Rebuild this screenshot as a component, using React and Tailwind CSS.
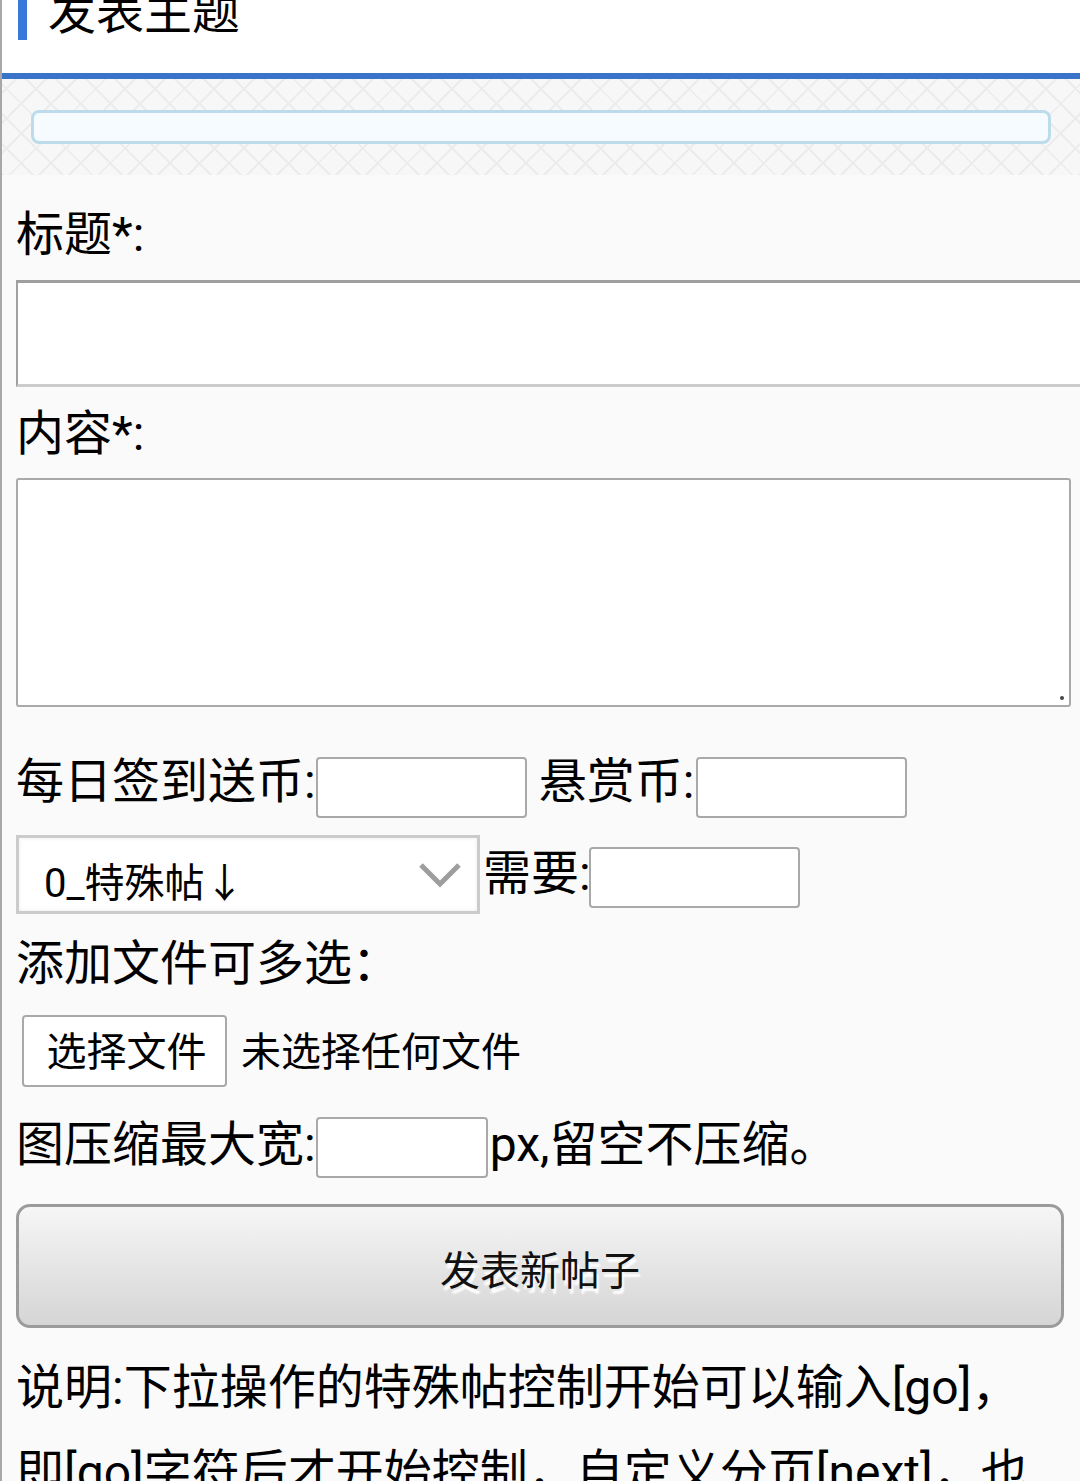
import { useState } from "react";

const FONT = "font-[Roboto,'Noto_Sans_CJK_SC',sans-serif]";

function App() {
  const [title, setTitle] = useState("");
  const [content, setContent] = useState("");

  return (
    <div className={`w-[1080px] h-[1481px] overflow-hidden border-l-2 border-[#a8a8a8] bg-[#fafafa] text-black ${FONT}`}>

      {/* ===== header ===== */}
      <div className="h-[79px] bg-white border-b-[6px] border-[#3a74c8] overflow-hidden">
        <div className="flex items-start pl-[16px] -mt-[11px]">
          <div className="w-[9px] h-[51px] bg-[#3778d8]"></div>
          <h1 className="ml-[21px] text-[48px] leading-[48px] font-normal">
            发表主题
          </h1>
        </div>
      </div>

      {/* ===== notice box ===== */}
      <div className="py-[31px] pl-[29px] pr-[29px] bg-[#f7f7f7] bg-[repeating-linear-gradient(45deg,#ececec_0_2px,transparent_2px_21px),repeating-linear-gradient(-45deg,#ececec_0_2px,transparent_2px_21px)]">
        <div className="h-[34px] rounded-[8px] border-[3px] border-[#bcdcec] bg-[#f5fbfe]"></div>
      </div>

      {/* ===== form ===== */}
      <div className="pl-[14px]">

        <div className="mt-[36px] text-[48px] leading-[48px]">标题*:</div>

        <input
          type="text"
          value={title}
          onChange={(e) => setTitle(e.target.value)}
          className="block mt-[21px] w-[1100px] h-[107px] bg-white border-l-2 border-t-[3px] border-b-[3px] border-r-0 border-l-[#a0a0a0] border-t-[#9e9e9e] border-b-[#cccccc] outline-none"
        />

        <div className="mt-[23px] text-[48px] leading-[48px]">内容*:</div>

        <div className="relative mt-[20px] w-[1055px] h-[229px]">
          <textarea
            value={content}
            onChange={(e) => setContent(e.target.value)}
            className="block w-full h-full bg-white border-2 border-[#a9a9a9] rounded-[3px] resize-none outline-none"
          />
          <div className="absolute right-[7px] bottom-[7px] w-[4px] h-[4px] rounded-full bg-[#444]"></div>
        </div>

        {/* row 1 */}
        <div className="flex items-start mt-[50px]">
          <span className="mt-[1px] text-[48px] leading-[48px] whitespace-nowrap">每日签到送币:</span>
          <input type="text" className="w-[211px] h-[61px] bg-white border-2 border-[#a9a9a9] rounded-[4px] outline-none" />
          <span className="ml-[12px] mt-[1px] text-[48px] leading-[48px] whitespace-nowrap">悬赏币:</span>
          <input type="text" className="ml-[2px] w-[211px] h-[61px] bg-white border-2 border-[#a9a9a9] rounded-[4px] outline-none" />
        </div>

        {/* row 2 */}
        <div className="flex items-start mt-[17px]">
          <div className="relative w-[464px] h-[79px] bg-white border-[3px] border-[#cbcbcb] shadow-[inset_0_0_4px_rgba(0,0,0,0.08)]">
            <span className="absolute left-[25px] top-[22px] text-[40px] leading-[48px] whitespace-nowrap">0_特殊帖↓</span>
            <svg className="absolute right-[15px] top-[24px]" width="44" height="26" viewBox="0 0 44 26">
              <path d="M3 3 L22 22 L41 3" fill="none" stroke="#9e9e9e" strokeWidth="5" />
            </svg>
          </div>
          <span className="ml-[3px] mt-[15px] text-[48px] leading-[48px] whitespace-nowrap">需要:</span>
          <input type="text" className="mt-[12px] -ml-[2px] w-[211px] h-[61px] bg-white border-2 border-[#a9a9a9] rounded-[4px] outline-none" />
        </div>

        <div className="mt-[26px] text-[48px] leading-[48px]">添加文件可多选：</div>

        {/* file */}
        <div className="flex items-center mt-[27px]">
          <button className="ml-[6px] w-[205px] h-[72px] bg-white border-2 border-[#a9a9a9] rounded-[4px] text-[40px] leading-[48px] pl-[4px] pt-[4px]">
            选择文件
          </button>
          <span className="ml-[14px] pt-[4px] text-[40px] leading-[48px]">未选择任何文件</span>
        </div>

        {/* compress */}
        <div className="flex items-start mt-[30px]">
          <span className="mt-[4px] text-[48px] leading-[48px] whitespace-nowrap">图压缩最大宽:</span>
          <input type="text" className="w-[172px] h-[61px] bg-white border-2 border-[#a9a9a9] rounded-[4px] outline-none" />
          <span className="ml-[2px] mt-[4px] text-[48px] leading-[48px] whitespace-nowrap">px,留空不压缩。</span>
        </div>

        <button className="block mt-[26px] w-[1048px] h-[124px] rounded-[14px] border-[3px] border-[#9b9b9b] bg-linear-to-b from-[#f6f6f6] to-[#d5d5d5] text-[40px] leading-[48px] text-[#111] pt-[12px] [text-shadow:2px_5px_2px_#ffffff]">
          发表新帖子
        </button>

        <p className="mt-[17px] text-[48px] leading-[85px] pr-[14px]">
          说明:下拉操作的特殊帖控制开始可以输入[go]，即[go]字符后才开始控制，自定义分页[next]，也
        </p>

      </div>
    </div>
  );
}

export default App;
